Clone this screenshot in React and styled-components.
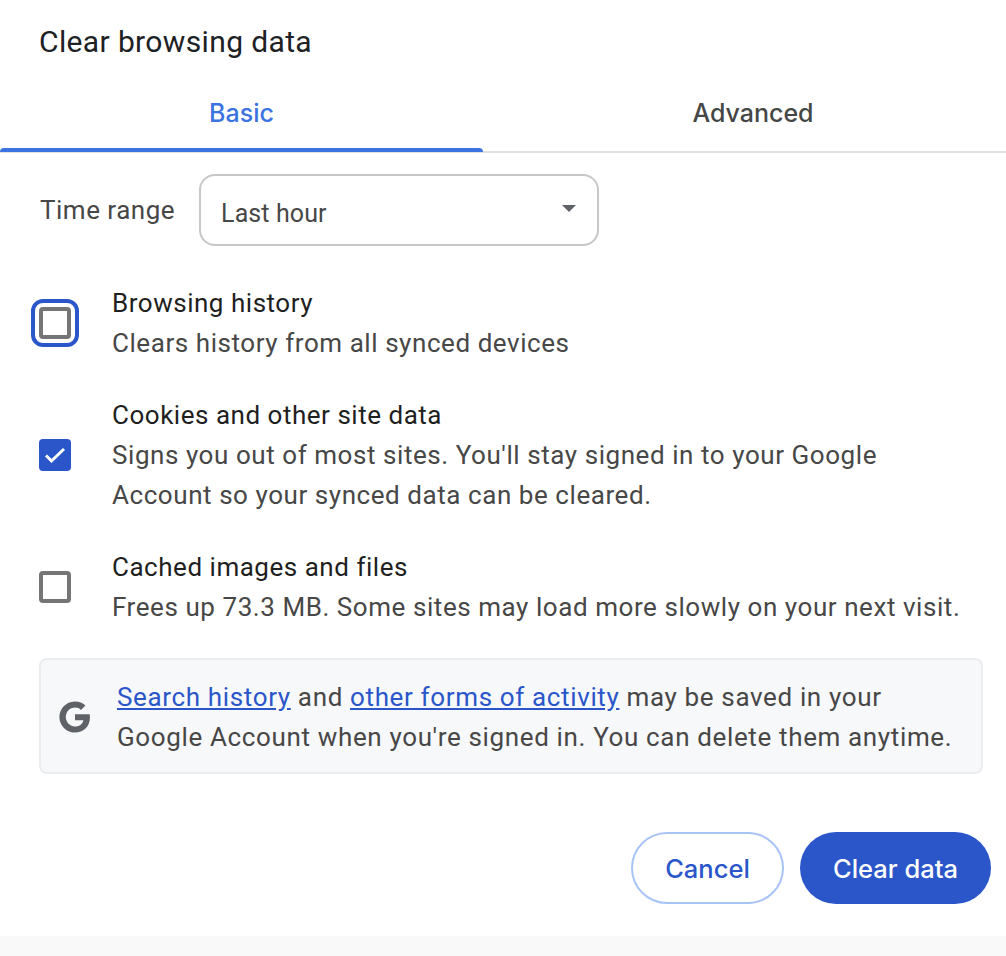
import React from "react";
import styled, { createGlobalStyle } from "styled-components";

const GlobalStyle = createGlobalStyle`
  html, body { margin: 0; padding: 0; background: #fff; }
  body { font-family: Roboto, "Liberation Sans", sans-serif; }
`;

const Page = styled.div`
  width: 1006px;
  height: 956px;
  display: flex;
  flex-direction: column;
  background: #fff;
  overflow: hidden;
`;

const Title = styled.h1`
  margin: 0;
  padding: 24px 39px 0;
  height: 52px;
  box-sizing: content-box;
  font-size: 30px;
  line-height: 36px;
  font-weight: 400;
  letter-spacing: 0.37px;
  color: #202124;
`;

const Tabs = styled.div`
  display: grid;
  grid-template-columns: 483px 1fr;
  height: 77px;
  border-bottom: 2px solid #e0e0e0;
  box-sizing: border-box;
`;

const Tab = styled.div`
  position: relative;
  display: flex;
  align-items: center;
  justify-content: center;
  padding-bottom: 1px;
  padding-left: ${(p) => (p.$active ? "0" : "17px")};
  font-family: Inter, sans-serif;
  font-size: 25px;
  font-weight: 500;
  color: ${(p) => (p.$active ? "#3b73e0" : "#444746")};
  ${(p) =>
    p.$active &&
    `&::after {
      content: "";
      position: absolute;
      left: 0;
      right: 0;
      bottom: -1px;
      height: 4px;
      background: #3b73e0;
      border-radius: 4px 4px 0 0;
    }`}
`;

const RangeRow = styled.div`
  display: flex;
  align-items: center;
  gap: 24px;
  padding: 21px 39px 0 40px;
`;

const RangeLabel = styled.span`
  font-size: 26px;
  letter-spacing: 0.5px;
  color: #474747;
`;

const Select = styled.div`
  width: 400px;
  height: 72px;
  box-sizing: border-box;
  display: flex;
  align-items: center;
  justify-content: space-between;
  padding: 6px 21px 0 20px;
  border: 2px solid #c7c7c7;
  border-radius: 16px;
  font-size: 25px;
  letter-spacing: 0.1px;
  color: #474747;
`;

const Caret = styled.span`
  width: 0;
  height: 0;
  margin-bottom: 9px;
  border-left: 7px solid transparent;
  border-right: 7px solid transparent;
  border-top: 7px solid #5f6368;
`;

const Options = styled.div`
  display: flex;
  flex-direction: column;
  gap: 32px;
  padding: 37px 39px 0;
`;

const Option = styled.div`
  display: grid;
  grid-template-columns: 32px 1fr;
  column-gap: 41px;
  align-items: center;
`;

const CheckBox = styled.div`
  position: relative;
  width: 32px;
  height: 32px;
  box-sizing: border-box;
  display: flex;
  align-items: center;
  justify-content: center;
  border-radius: 4px;
  border: ${(p) => (p.$checked ? "none" : "4px solid #757575")};
  background: ${(p) => (p.$checked ? "#2a56c9" : "#fff")};
  ${(p) =>
    p.$focused &&
    `&::after {
      content: "";
      position: absolute;
      inset: -12px;
      border: 4px solid #2a56c9;
      border-radius: 12px;
    }`}
`;

const OptionText = styled.div`
  display: flex;
  flex-direction: column;
`;

const OptionTitle = styled.div`
  font-size: 26px;
  line-height: 40px;
  letter-spacing: 0.52px;
  color: #1f1f1f;
`;

const OptionDesc = styled.div`
  font-size: 26px;
  line-height: 40px;
  letter-spacing: 0.56px;
  color: #474747;
`;

const Notice = styled.div`
  display: flex;
  align-items: center;
  gap: 25px;
  height: 116px;
  box-sizing: border-box;
  margin: 31px 23px 0 39px;
  padding: 1px 20px 0 17px;
  background: #f7f8fa;
  border: 2px solid #ebecef;
  border-radius: 8px;
  font-size: 26px;
  line-height: 40px;
  letter-spacing: 0.64px;
  color: #474747;
  svg { flex: none; }
`;

const NoticeLink = styled.a`
  color: #2a56c9;
  text-decoration: underline;
`;

const Actions = styled.div`
  display: flex;
  justify-content: flex-end;
  gap: 16px;
  padding: 58px 15px 0 0;
`;

const Button = styled.button`
  height: 72px;
  box-sizing: border-box;
  padding: 1px 0 0;
  width: ${(p) => (p.$primary ? "191px" : "153px")};
  border-radius: 36px;
  font-family: Inter, sans-serif;
  font-size: 25.5px;
  font-weight: 500;
  color: ${(p) => (p.$primary ? "#fff" : "#2a56c9")};
  background: ${(p) => (p.$primary ? "#2a56c9" : "#fff")};
  border: ${(p) => (p.$primary ? "none" : "2px solid #a8c4f5")};
`;

const Footer = styled.div`
  margin-top: 32px;
  flex: 1;
  background: #f9f9f9;
`;

function Check() {
  return (
    <svg width="24" height="24" viewBox="0 0 24 24" fill="none">
      <path d="M3 12.5l5.5 5.5L21 6" stroke="#fff" strokeWidth="3" />
    </svg>
  );
}

function GoogleG() {
  return (
    <svg width="34" height="34" viewBox="0 0 48 48" fill="#5f6368">
      <path d="M45.12 24.5c0-1.56-.14-3.06-.4-4.5H24v8.51h11.84c-.51 2.75-2.06 5.08-4.39 6.64v5.52h7.11c4.16-3.83 6.56-9.47 6.56-16.17z" />
      <path d="M24 46c5.94 0 10.92-1.97 14.56-5.33l-7.11-5.52c-1.97 1.32-4.49 2.1-7.45 2.1-5.73 0-10.58-3.87-12.31-9.07H4.34v5.7C7.96 41.07 15.4 46 24 46z" />
      <path d="M11.69 28.18C11.25 26.86 11 25.45 11 24s.25-2.86.69-4.18v-5.7H4.34C2.85 17.09 2 20.45 2 24c0 3.55.85 6.91 2.34 9.88l7.35-5.7z" />
      <path d="M24 10.75c3.23 0 6.13 1.11 8.41 3.29l6.31-6.31C34.91 4.18 29.93 2 24 2 15.4 2 7.96 6.93 4.34 14.12l7.35 5.7c1.73-5.2 6.58-9.07 12.31-9.07z" />
    </svg>
  );
}

const rows = [
  {
    title: "Browsing history",
    desc: ["Clears history from all synced devices"],
    focused: true,
  },
  {
    title: "Cookies and other site data",
    desc: [
      "Signs you out of most sites. You'll stay signed in to your Google",
      "Account so your synced data can be cleared.",
    ],
    checked: true,
  },
  {
    title: "Cached images and files",
    desc: ["Frees up 73.3 MB. Some sites may load more slowly on your next visit."],
  },
];

export default function App() {
  return (
    <Page>
      <GlobalStyle />
      <Title>Clear browsing data</Title>
      <Tabs>
        <Tab $active>Basic</Tab>
        <Tab>Advanced</Tab>
      </Tabs>
      <RangeRow>
        <RangeLabel>Time range</RangeLabel>
        <Select>
          Last hour
          <Caret />
        </Select>
      </RangeRow>
      <Options>
        {rows.map((row) => (
          <Option key={row.title}>
            <CheckBox $checked={row.checked} $focused={row.focused}>
              {row.checked && <Check />}
            </CheckBox>
            <OptionText>
              <OptionTitle>{row.title}</OptionTitle>
              {row.desc.map((line) => (
                <OptionDesc key={line}>{line}</OptionDesc>
              ))}
            </OptionText>
          </Option>
        ))}
      </Options>
      <Notice>
        <GoogleG />
        <div>
          <NoticeLink>Search history</NoticeLink> and{" "}
          <NoticeLink>other forms of activity</NoticeLink> may be saved in your
          <br />
          Google Account when you're signed in. You can delete them anytime.
        </div>
      </Notice>
      <Actions>
        <Button>Cancel</Button>
        <Button $primary>Clear data</Button>
      </Actions>
      <Footer />
    </Page>
  );
}
